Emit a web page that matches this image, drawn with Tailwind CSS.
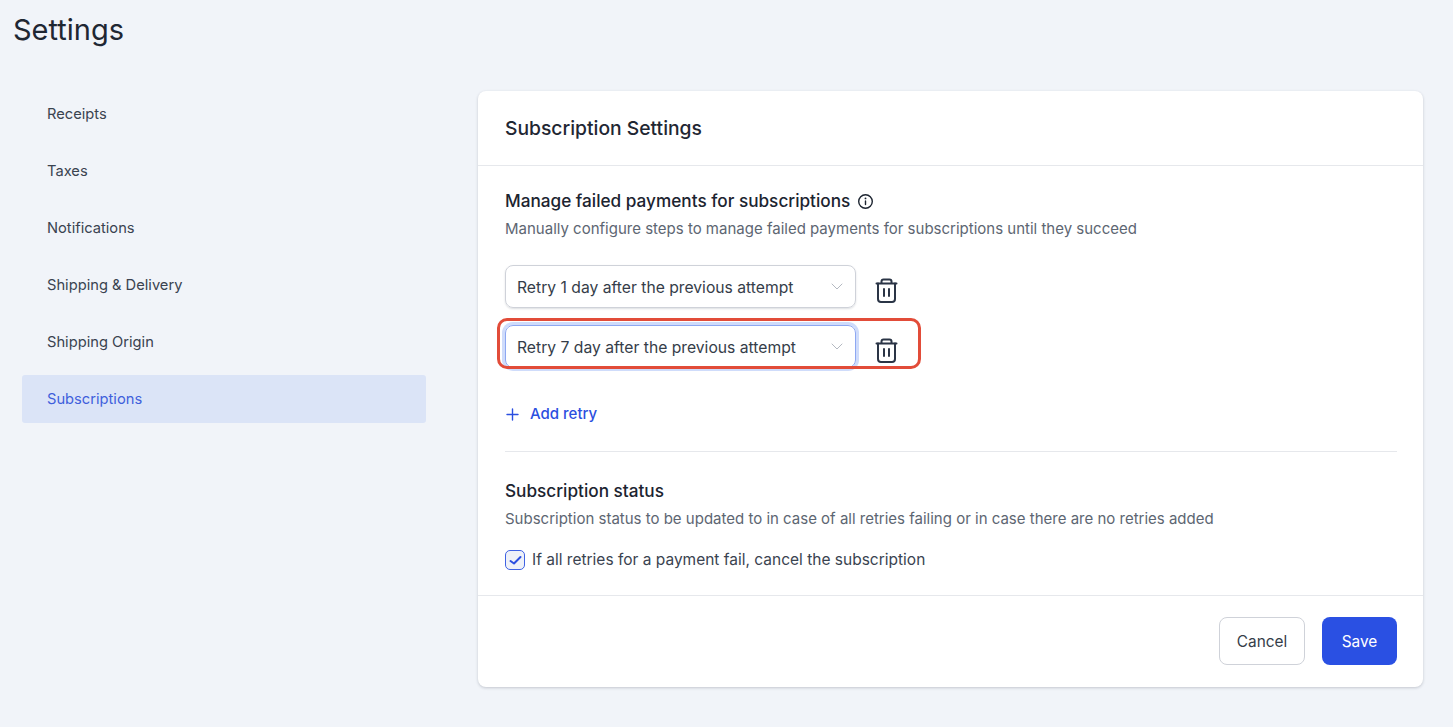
<!DOCTYPE html>
<html lang="en">
<head>
  <meta charset="UTF-8" />
  <meta name="viewport" content="width=device-width, initial-scale=1" />
  <title>Settings</title>
  <script src="https://cdn.jsdelivr.net/npm/@tailwindcss/browser@4"></script>
</head>
<body class="bg-[#f1f4f9] font-['Inter',sans-serif] text-[#1f2733] h-[727px] overflow-hidden">
  <h1 class="pl-[13px] pt-[12px] h-[90px] text-[29px] leading-[36px] text-[#1f2733]">Settings</h1>

  <div class="flex items-start">
    <!-- left nav -->
    <nav class="w-[404px] ml-[22px] text-[14.7px] text-[#3a4350]">
      <a class="flex items-center h-[48px] pl-[25px] mb-[9px]">Receipts</a>
      <a class="flex items-center h-[48px] pl-[25px] mb-[9px]">Taxes</a>
      <a class="flex items-center h-[48px] pl-[25px] mb-[9px]">Notifications</a>
      <a class="flex items-center h-[48px] pl-[25px] mb-[9px]">Shipping &amp; Delivery</a>
      <a class="flex items-center h-[48px] pl-[25px] mb-[9px]">Shipping Origin</a>
      <a class="flex items-center h-[48px] pl-[25px] rounded-[3px] bg-[#dbe4f7] text-[#3f5fdc]">Subscriptions</a>
    </nav>

    <!-- card -->
    <main class="w-[945px] h-[596px] ml-[52px] mt-[1px] bg-white rounded-lg shadow-[0_1px_3px_rgba(30,40,60,0.22)] flex flex-col">
      <div class="h-[75px] flex items-center pl-[27px] pr-[26px] border-b border-[#e6e8ec]">
        <h2 class="text-[19.3px] font-medium text-[#1f2733]">Subscription Settings</h2>
      </div>

      <div class="flex-1 pl-[27px] pr-[26px] pt-[24px]">
        <div class="flex items-center h-[22px]">
          <h3 class="text-[17.2px] font-medium text-[#1c2430]">Manage failed payments for subscriptions</h3>
          <svg class="ml-[7px] mt-[1px]" width="17" height="17" viewBox="0 0 17 17" fill="none" stroke="#1c2430" stroke-width="1.4" stroke-linecap="round">
            <circle cx="8.5" cy="8.5" r="6.8" />
            <path d="M8.5 8v3.6" />
            <path d="M8.5 5.3v.1" stroke-width="1.8" />
          </svg>
        </div>
        <p class="mt-[7px] text-[15px] leading-[20px] text-[#5d6672]">Manually configure steps to manage failed payments for subscriptions until they succeed</p>

        <div class="mt-[26px] flex items-center">
          <div class="w-[351px] h-[43px] rounded-lg border border-[#cfd2d9] shadow-[0_1px_2px_rgba(30,40,60,0.15)] flex items-center justify-between pl-[11px] pr-[12px] text-[15.7px] text-[#353d49]">
            <span class="pt-[2px]">Retry 1 day after the previous attempt</span>
            <svg width="12" height="7" viewBox="0 0 12 7" fill="none" stroke="#b4b9c1" stroke-width="1" stroke-linecap="round" stroke-linejoin="round"><path d="M1 1l5 5 5-5" /></svg>
          </div>
          <svg class="ml-[18px] mt-[9px]" width="24" height="26" viewBox="0 0 24 26" fill="none" stroke="#2b3546" stroke-width="2" stroke-linecap="round" stroke-linejoin="round">
            <path d="M2.5 5.5h20" />
            <path d="M7.5 5V3.5a2 2 0 0 1 2-2h6a2 2 0 0 1 2 2V5" />
            <path d="M4 5.5v15.500a3 3 0 0 0 3 3h11a3 3 0 0 0 3-3V5.500" />
            <path d="M10 11v7M15 11v7" />
          </svg>
        </div>

        <div class="mt-[17px] relative flex items-center">
          <div class="w-[351px] h-[43px] rounded-lg border border-[#8ea8f2] shadow-[0_0_0_3px_#cfdcfb] flex items-center justify-between pl-[11px] pr-[12px] text-[15.7px] text-[#353d49]">
            <span class="pt-[2px]">Retry 7 day after the previous attempt</span>
            <svg width="12" height="7" viewBox="0 0 12 7" fill="none" stroke="#b4b9c1" stroke-width="1" stroke-linecap="round" stroke-linejoin="round"><path d="M1 1l5 5 5-5" /></svg>
          </div>
          <svg class="ml-[18px] mt-[9px]" width="24" height="26" viewBox="0 0 24 26" fill="none" stroke="#2b3546" stroke-width="2" stroke-linecap="round" stroke-linejoin="round">
            <path d="M2.5 5.5h20" />
            <path d="M7.5 5V3.5a2 2 0 0 1 2-2h6a2 2 0 0 1 2 2V5" />
            <path d="M4 5.5v15.500a3 3 0 0 0 3 3h11a3 3 0 0 0 3-3V5.500" />
            <path d="M10 11v7M15 11v7" />
          </svg>
          <!-- red annotation box -->
          <div class="absolute left-[-8px] top-[-7px] w-[424px] h-[51px] rounded-[10px] border-[3px] border-[#e24c39]"></div>
        </div>

        <div class="mt-[35px] flex items-center h-[22px] text-[#2b4fe0]">
          <svg class="ml-[1px]" width="13" height="13" viewBox="0 0 13 13" fill="none" stroke="#2b4fe0" stroke-width="1.4" stroke-linecap="round"><path d="M6.5 1v11M1 6.5h11" /></svg>
          <span class="ml-[11px] text-[15px] font-medium">Add retry</span>
        </div>

        <div class="mt-[26px] border-t border-[#e6e8ec]"></div>

        <h3 class="mt-[28px] text-[17.2px] leading-[22px] font-medium text-[#1c2430]">Subscription status</h3>
        <p class="mt-[7px] text-[15px] leading-[20px] text-[#5d6672]">Subscription status to be updated to in case of all retries failing or in case there are no retries added</p>

        <label class="mt-[21px] flex items-center h-[20px]">
          <span class="w-[20px] h-[20px] rounded-[5px] border border-[#3f62e3] bg-[#eef1f8] flex items-center justify-center">
            <svg width="13" height="11" viewBox="0 0 13 11" fill="none" stroke="#2b4fe0" stroke-width="2" stroke-linecap="round" stroke-linejoin="round"><path d="M1.5 6l3.500 2.500 6.500-6.500" /></svg>
          </span>
          <span class="ml-[7px] text-[15.5px] text-[#3a4350]">If all retries for a payment fail, cancel the subscription</span>
        </label>
      </div>

      <div class="h-[92px] border-t border-[#e6e8ec] flex items-center justify-end gap-[17px] pr-[26px] pb-[2px]">
        <button class="w-[86px] h-[48px] pt-[2px] rounded-lg border border-[#cfd2d9] bg-white text-[15.4px] text-[#353d49]">Cancel</button>
        <button class="w-[75px] h-[48px] pt-[2px] rounded-lg bg-[#2a50e3] text-[15.4px] text-white">Save</button>
      </div>
    </main>
  </div>
</body>
</html>
